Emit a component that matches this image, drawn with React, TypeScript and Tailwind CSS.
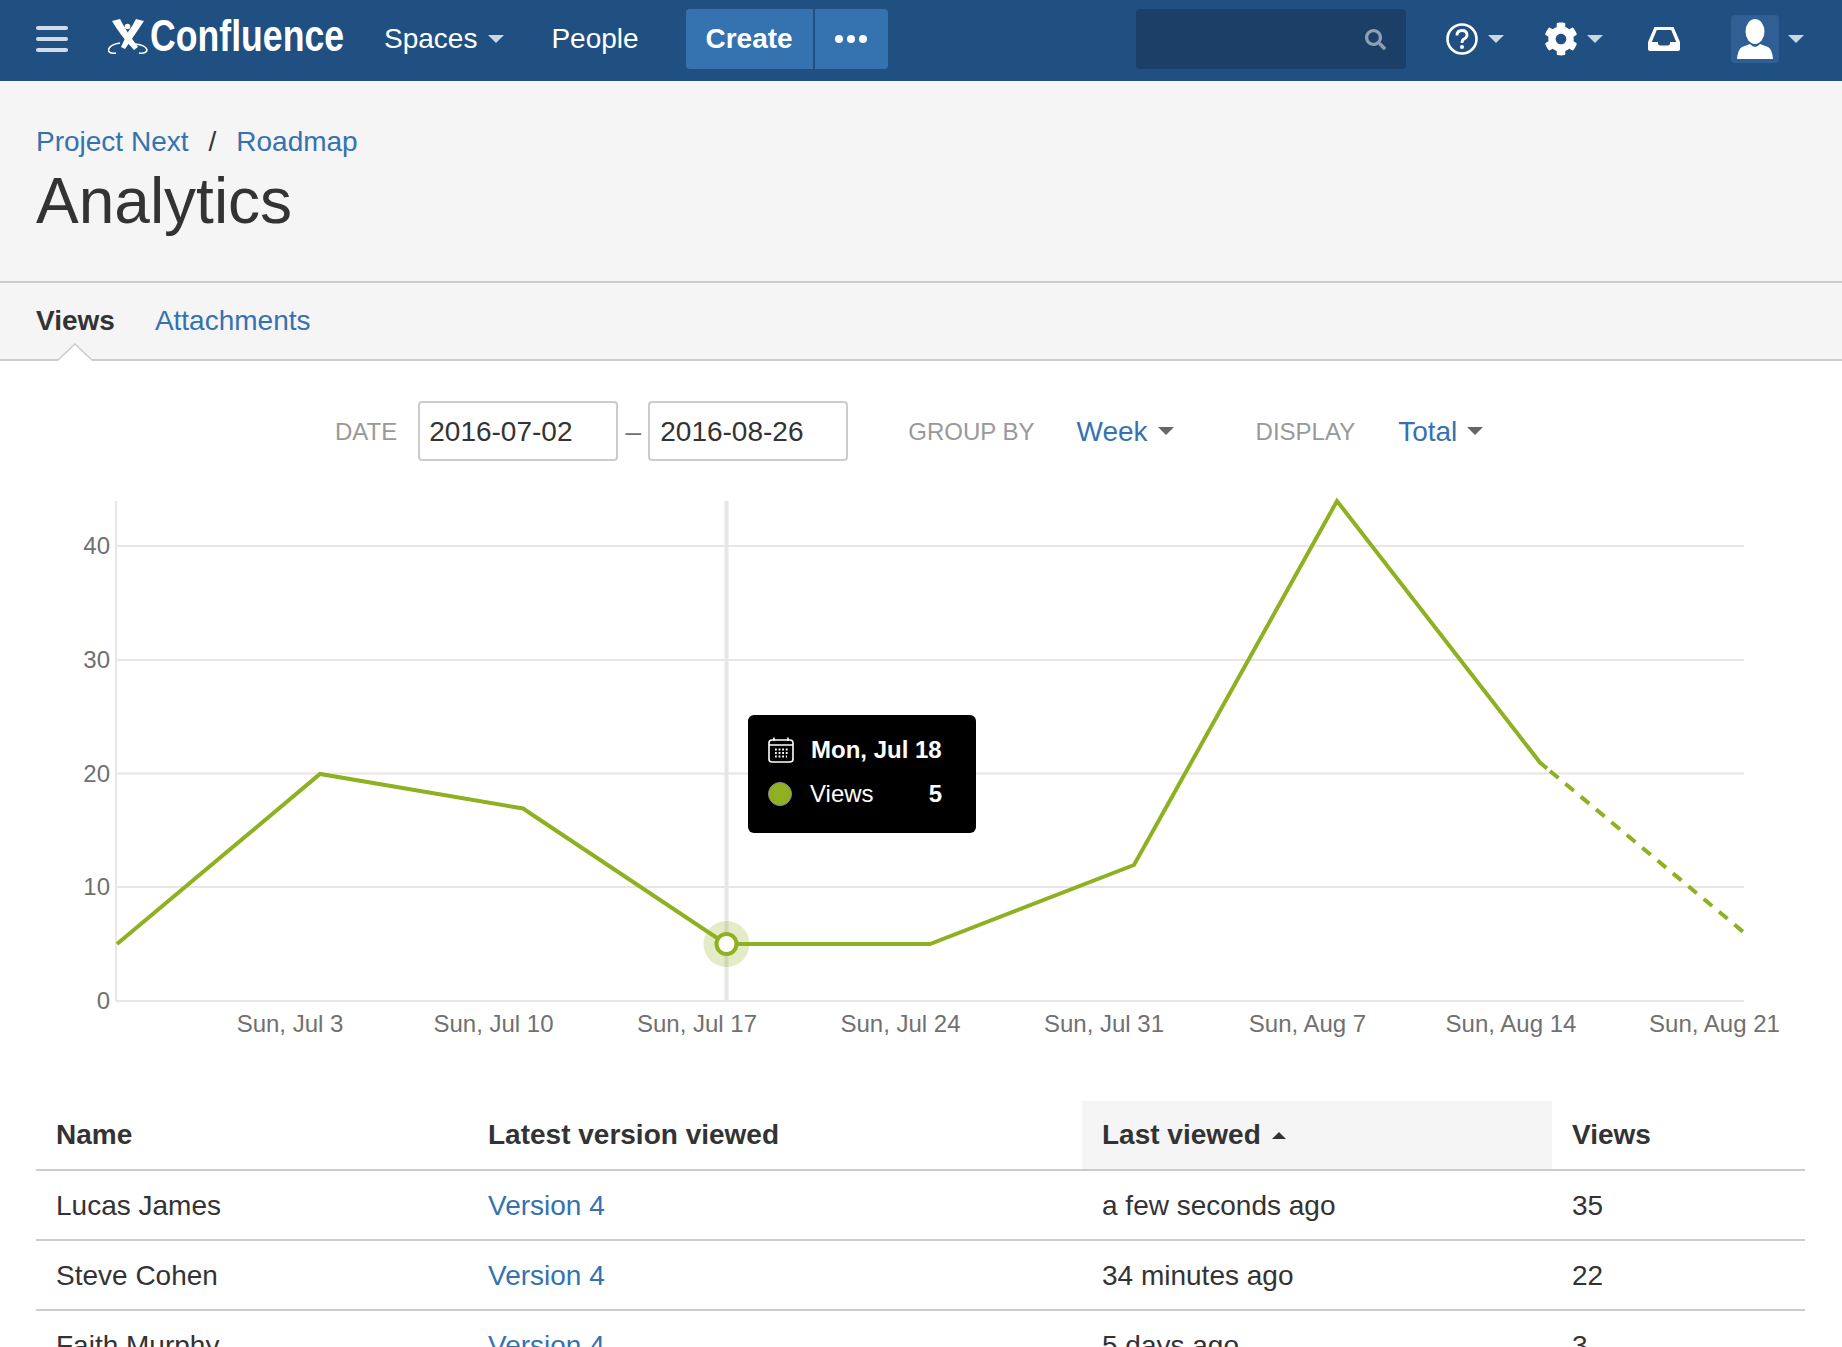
import { FaCog, FaSearch } from 'react-icons/fa'

const rows = [
  { name: 'Lucas James', version: 'Version 4', last: 'a few seconds ago', views: '35' },
  { name: 'Steve Cohen', version: 'Version 4', last: '34 minutes ago', views: '22' },
  { name: 'Faith Murphy', version: 'Version 4', last: '5 days ago', views: '3' },
]

// chart coordinates are relative to the svg, which starts 480px down the page
const gridLines = [
  { label: '40', y: 66 },
  { label: '30', y: 180 },
  { label: '20', y: 293.5 },
  { label: '10', y: 407 },
  { label: '0', y: 521 },
]

const xLabels = [
  { label: 'Sun, Jul 3', x: 290 },
  { label: 'Sun, Jul 10', x: 493.5 },
  { label: 'Sun, Jul 17', x: 697 },
  { label: 'Sun, Jul 24', x: 900.5 },
  { label: 'Sun, Jul 31', x: 1104 },
  { label: 'Sun, Aug 7', x: 1307.5 },
  { label: 'Sun, Aug 14', x: 1511 },
  { label: 'Sun, Aug 21', x: 1714.5 },
]

function Caret({ className }: { className: string }) {
  return <span className={`inline-block h-0 w-0 border-x-[8px] border-t-[8px] border-x-transparent ${className}`} />
}

function Logo() {
  return (
    <svg width="40" height="36" viewBox="0 0 40 36" className="mb-[5px] shrink-0">
      <path d="M4 2 L12 0 Q18 12 30 28 L26 31 Q12 16 4 2 Z" fill="#fff" />
      <path d="M36 2 L28 0 Q24 8 20 13 L13 28 L17 30 Q28 14 36 2 Z" fill="#fff" />
      <circle cx="19.5" cy="7.5" r="2.8" fill="#fff" />
      <path d="M12 24 Q0 26 0.5 32 Q2 35 8 34 M27 25 Q38 26 39 31 Q38 35 31 34" fill="none" stroke="#fff" strokeWidth="1.6" />
    </svg>
  )
}

function Inbox() {
  return (
    <svg width="32" height="24" viewBox="0 0 32 24" fill="#fff">
      <path fillRule="evenodd" d="M6.5 0 H25.5 L32 15 V22 Q32 24 30 24 H2 Q0 24 0 22 V15 Z M8.8 3 L3.8 15 H10 V16 Q10 18.5 12.5 18.5 H19.5 Q22 18.5 22 16 V15 H28.2 L23.2 3 Z" />
    </svg>
  )
}

function Avatar() {
  return (
    <div className="flex h-[48px] w-[48px] items-center justify-center rounded-[4px] bg-[#2f5f95]">
      <svg width="36" height="40" viewBox="0 0 36 40" fill="#fff">
        <ellipse cx="18" cy="12.5" rx="9.5" ry="12.5" />
        <path d="M0 40 Q1 30 5 28 L13 25 Q18 31 23 25 L31 28 Q35 30 36 40 Z" />
      </svg>
    </div>
  )
}

function Help() {
  return (
    <svg width="32" height="32" viewBox="0 0 32 32" fill="none" stroke="#fff">
      <circle cx="16" cy="16" r="14.5" strokeWidth="2.6" />
      <path d="M11 12.5 Q11 7.5 16 7.5 Q21 7.5 21 12 Q21 14.5 18 16 Q16 17 16 20" strokeWidth="2.8" />
      <circle cx="16" cy="24" r="2" fill="#fff" stroke="none" />
    </svg>
  )
}

function Calendar() {
  return (
    <svg width="26" height="26" viewBox="0 0 26 26" fill="none" stroke="#fff" strokeWidth="1.6">
      <rect x="1" y="3" width="24" height="22" rx="3" />
      <path d="M1 8 H25 M6 0.5 V4 M20 0.5 V4" />
      <path d="M7 12.5 H21 M7 16 H21 M7 19.5 H19" strokeWidth="1.8" strokeDasharray="1.8 1.8" />
    </svg>
  )
}

function Header() {
  return (
    <header className="flex h-[81px] items-center bg-[#205081] pb-[3px] pl-[36px] text-[28px] text-white">
      <div className="flex w-[32px] flex-col gap-[7px]">
        <div className="h-[4px] rounded-full bg-[#d2dce8]" />
        <div className="h-[4px] rounded-full bg-[#d2dce8]" />
        <div className="h-[4px] rounded-full bg-[#d2dce8]" />
      </div>
      <div className="ml-[40px] flex w-[276px] items-center">
        <Logo />
        <span className="mb-[6px] ml-[2px] origin-left scale-x-[0.81] text-[44px] font-bold leading-none">Confluence</span>
      </div>
      <div className="flex items-center">
        <span>Spaces</span>
        <Caret className="ml-[11px] border-t-[#ccd5e2]" />
      </div>
      <span className="ml-[47px]">People</span>
      <div className="ml-[47px] flex h-[60px] w-[202px] overflow-hidden rounded-[4px] bg-[#3572b0]">
        <div className="flex w-[129px] items-center justify-center border-r-2 border-[#205081] font-bold">Create</div>
        <div className="flex flex-1 items-center justify-center gap-[4px]">
          <span className="h-[8px] w-[8px] rounded-full bg-white" />
          <span className="h-[8px] w-[8px] rounded-full bg-white" />
          <span className="h-[8px] w-[8px] rounded-full bg-white" />
        </div>
      </div>
      <div className="ml-[248px] flex h-[60px] w-[270px] items-center justify-end rounded-[4px] bg-[#1b3f66] pr-[20px]">
        <FaSearch size={21} color="#8f9fb3" />
      </div>
      <div className="ml-[40px] flex items-center">
        <Help />
        <Caret className="ml-[10px] border-t-[#ccd5e2]" />
      </div>
      <div className="ml-[40px] flex items-center">
        <FaCog size={34} color="#fff" />
        <Caret className="ml-[9px] border-t-[#ccd5e2]" />
      </div>
      <div className="ml-[45px] flex items-center">
        <Inbox />
      </div>
      <div className="ml-[51px] flex items-center">
        <Avatar />
        <Caret className="ml-[9px] border-t-[#ccd5e2]" />
      </div>
    </header>
  )
}

function PageHeader() {
  return (
    <div className="h-[202px] border-b-2 border-[#cccccc] bg-[#f5f5f5] px-[36px] pt-[43px]">
      <div className="flex h-[36px] items-center text-[28px] leading-[36px]">
        <a className="text-[#3572b0]">Project Next</a>
        <span className="mx-[20px] text-[#333]">/</span>
        <a className="text-[#3572b0]">Roadmap</a>
      </div>
      <h1 className="mt-[3px] text-[64px] font-normal leading-[76px] text-[#333]">Analytics</h1>
    </div>
  )
}

function Tabs() {
  return (
    <div className="relative flex h-[78px] items-center gap-[40px] border-b-2 border-[#cccccc] bg-[#f5f5f5] px-[36px] text-[28px]">
      <span className="font-bold text-[#333]">Views</span>
      <a className="text-[#3572b0]">Attachments</a>
      <svg width="36" height="18" viewBox="0 0 36 18" className="absolute bottom-[-2px] left-[57px]">
        <path d="M0 18 L1 17 L18 1 L35 17 L36 18 Z" fill="#fff" />
        <path d="M0 17 L1 17 L18 1 L35 17 L36 17" fill="none" stroke="#ccc" strokeWidth="1.5" />
      </svg>
    </div>
  )
}

function Filters() {
  return (
    <div className="flex h-[119px] items-start pl-[335px] pt-[40px] text-[28px] text-[#333]">
      <div className="flex h-[60px] items-center">
        <span className="pt-[2px] text-[24px] text-[#999]">DATE</span>
        <div className="ml-[21px] flex h-[60px] w-[200px] items-center rounded-[4px] border-2 border-[#cccccc] pl-[9px] pt-[1px]">2016-07-02</div>
        <span className="mx-[7px] w-[16px] pt-[2px] text-center text-[#707070]">–</span>
        <div className="flex h-[60px] w-[200px] items-center rounded-[4px] border-2 border-[#cccccc] pl-[10px] pt-[1px]">2016-08-26</div>
        <span className="ml-[60px] pt-[2px] text-[24px] text-[#999]">GROUP BY</span>
        <span className="ml-[42px] pt-[1px] text-[#3572b0]">Week</span>
        <Caret className="ml-[10px] border-t-[#666]" />
        <span className="ml-[82px] pt-[2px] text-[24px] text-[#999]">DISPLAY</span>
        <span className="ml-[43px] pt-[1px] text-[#3572b0]">Total</span>
        <Caret className="ml-[10px] border-t-[#666]" />
      </div>
    </div>
  )
}

function Chart() {
  return (
    <div className="relative h-[621px]">
      <svg width="1842" height="621" viewBox="0 0 1842 621" className="block">
        <line x1="116" y1="21" x2="116" y2="521" stroke="#e6e6e6" strokeWidth="2" />
        {gridLines.map(g => (
          <g key={g.label}>
            <line x1="116" y1={g.y} x2="1744" y2={g.y} stroke="#e6e6e6" strokeWidth="2" />
            <text x="110" y={g.y + 8} textAnchor="end" fontSize="24" fill="#707070">{g.label}</text>
          </g>
        ))}
        {xLabels.map(l => (
          <text key={l.label} x={l.x} y="552" textAnchor="middle" fontSize="24" fill="#707070">{l.label}</text>
        ))}
        <line x1="726.5" y1="21" x2="726.5" y2="521" stroke="#e6e6e6" strokeWidth="4" />
        <polyline
          points="117,464 320,294 523,328.5 726,464 930,464 1134,385 1337,21 1540,282.5 1547,288.5"
          fill="none"
          stroke="#8eb021"
          strokeWidth="4"
        />
        <line x1="1550" y1="291" x2="1744" y2="452.5" stroke="#8eb021" strokeWidth="4" strokeDasharray="11 9" />
        <circle cx="726.5" cy="464" r="23" fill="#8eb021" fillOpacity="0.25" />
        <circle cx="726.5" cy="464" r="10" fill="#fff" stroke="#8eb021" strokeWidth="4" />
      </svg>
      {/* tooltip for the hovered point */}
      <div className="absolute left-[748px] top-[235px] h-[118px] w-[228px] rounded-[6px] bg-black pl-[20px] pr-[34px] pt-[22px] text-[24px] text-white">
        <div className="flex h-[26px] items-center">
          <Calendar />
          <span className="ml-[17px] font-bold">Mon, Jul 18</span>
        </div>
        <div className="mt-[18px] flex h-[26px] items-center">
          <span className="h-[24px] w-[24px] rounded-full border border-[#8a8a8a] bg-[#8eb021]" />
          <span className="ml-[18px]">Views</span>
          <span className="ml-auto font-bold">5</span>
        </div>
      </div>
    </div>
  )
}

function ViewsTable() {
  return (
    <div className="pl-[36px] pr-[37px]">
      <table className="w-full table-fixed border-collapse text-left text-[28px] text-[#333]">
        <colgroup>
          <col className="w-[432px]" />
          <col className="w-[614px]" />
          <col className="w-[470px]" />
          <col />
        </colgroup>
        <thead>
          <tr className="h-[69px] border-b-2 border-[#cccccc] font-bold">
            <th className="px-[20px]">Name</th>
            <th className="px-[20px]">Latest version viewed</th>
            <th className="bg-[#f5f5f5] px-[20px]">
              <span className="inline-flex items-center">
                Last viewed
                <span className="ml-[11px] inline-block h-0 w-0 border-x-[7px] border-b-[7px] border-x-transparent border-b-[#333]" />
              </span>
            </th>
            <th className="px-[20px]">Views</th>
          </tr>
        </thead>
        <tbody>
          {rows.map(r => (
            <tr key={r.name} className="h-[70px] border-b-2 border-[#cccccc]">
              <td className="px-[20px] pt-[1px]">{r.name}</td>
              <td className="px-[20px] pt-[1px] text-[#3572b0]">{r.version}</td>
              <td className="px-[20px] pt-[1px]">{r.last}</td>
              <td className="px-[20px] pt-[1px]">{r.views}</td>
            </tr>
          ))}
        </tbody>
      </table>
    </div>
  )
}

export default function App() {
  return (
    <div className="h-[1347px] overflow-hidden bg-white font-['Liberation_Sans',Arial,sans-serif]">
      <Header />
      <PageHeader />
      <Tabs />
      <Filters />
      <Chart />
      <ViewsTable />
    </div>
  )
}
